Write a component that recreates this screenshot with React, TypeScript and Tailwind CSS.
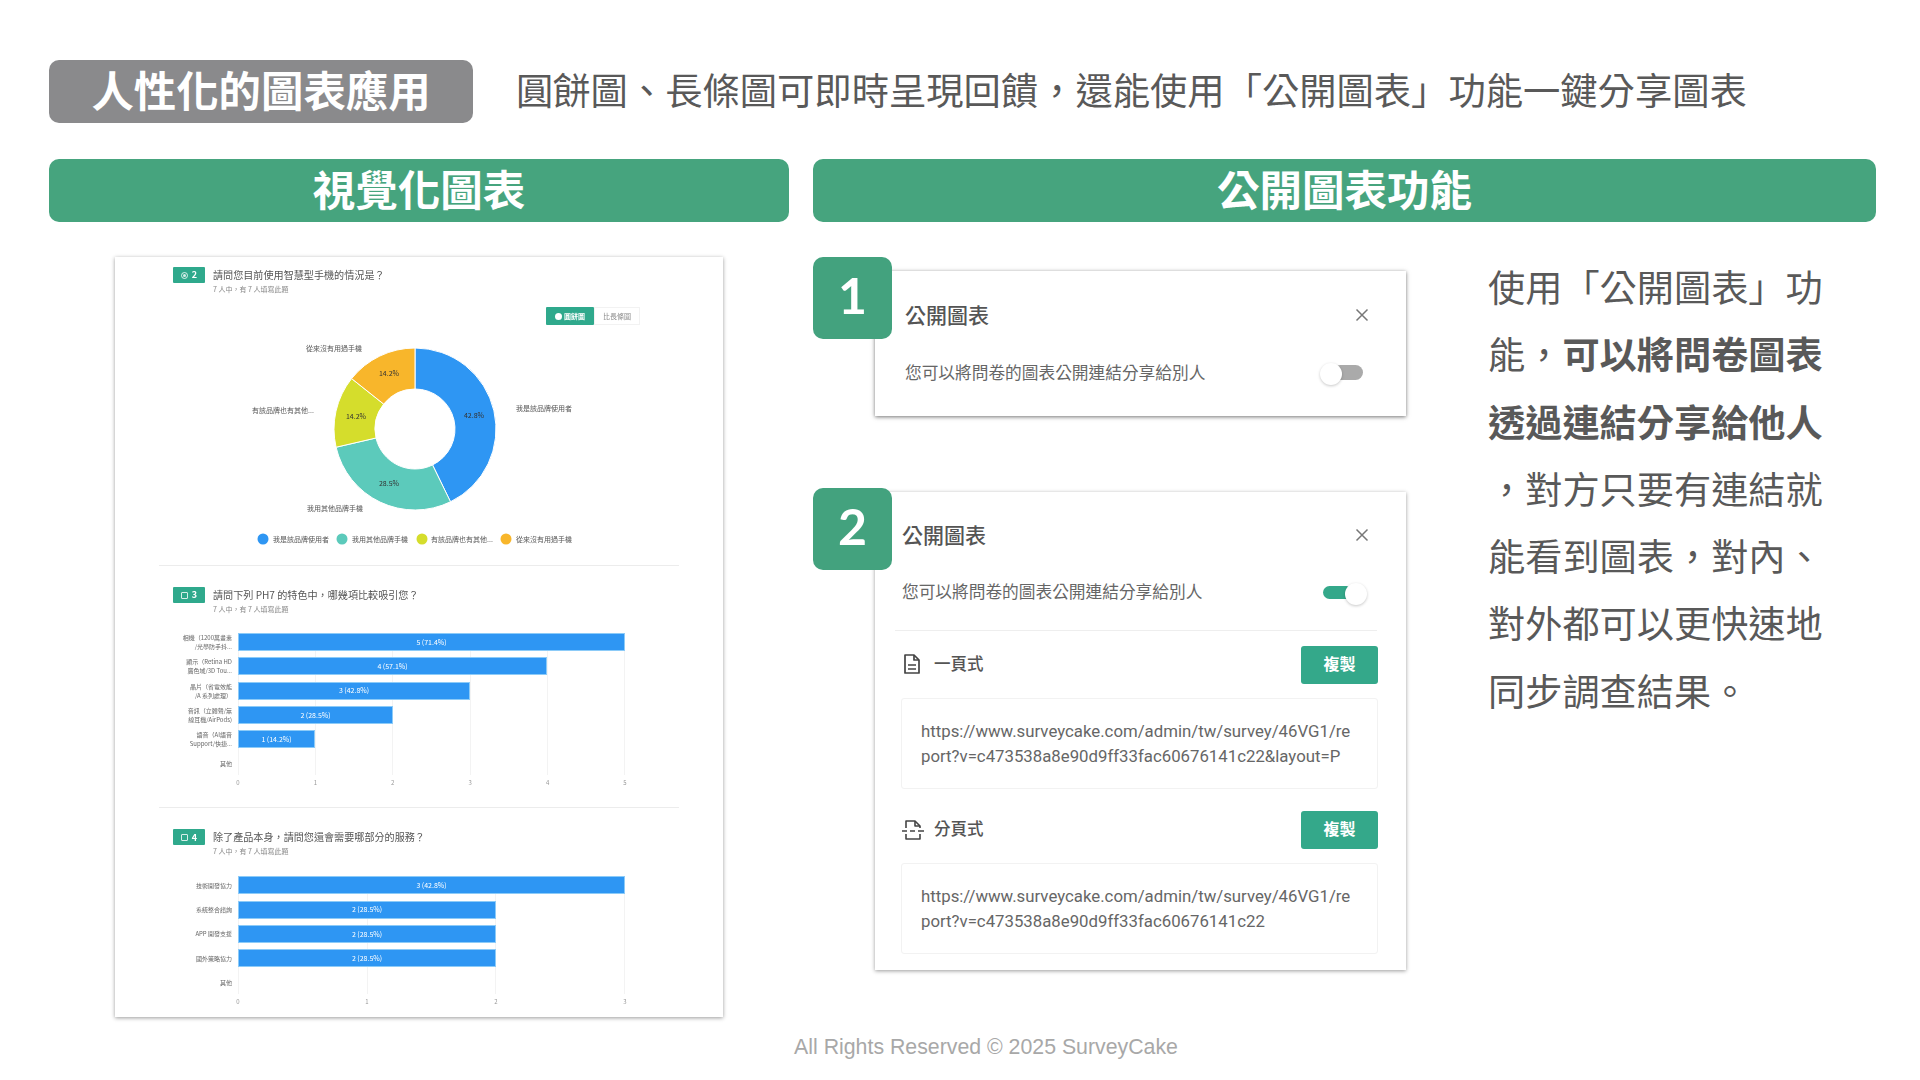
import React from 'react'

const cjk = "font-['Noto_Sans_CJK_TC','Liberation_Sans',sans-serif]"

function polar(cx: number, cy: number, r: number, deg: number) {
    const a = ((deg - 90) * Math.PI) / 180
    return [cx + r * Math.cos(a), cy + r * Math.sin(a)]
}

function slice(from: number, to: number) {
    const cx = 300
    const cy = 104
    const [x1, y1] = polar(cx, cy, 81, from)
    const [x2, y2] = polar(cx, cy, 81, to)
    const [x3, y3] = polar(cx, cy, 40, to)
    const [x4, y4] = polar(cx, cy, 40, from)
    const big = to - from > 180 ? 1 : 0
    return `M${x1} ${y1}A81 81 0 ${big} 1 ${x2} ${y2}L${x3} ${y3}A40 40 0 ${big} 0 ${x4} ${y4}Z`
}

function Donut() {
    const label = 'fill-[#555] text-[7px]'
    return (
        <svg width="608" height="240" className="block">
            <path d={slice(0, 154)} fill="#2e96f3" stroke="#fff" strokeWidth="1" />
            <path d={slice(154, 257)} fill="#5ccabb" stroke="#fff" strokeWidth="1" />
            <path d={slice(257, 308.5)} fill="#d5dd2c" stroke="#fff" strokeWidth="1" />
            <path d={slice(308.5, 360)} fill="#f8b62b" stroke="#fff" strokeWidth="1" />
            <text x="359" y="93" textAnchor="middle" className="fill-[#333] text-[7px]">42.8%</text>
            <text x="274" y="161" textAnchor="middle" className="fill-[#333] text-[7px]">28.5%</text>
            <text x="241" y="94" textAnchor="middle" className="fill-[#333] text-[7px]">14.2%</text>
            <text x="274" y="51" textAnchor="middle" className="fill-[#333] text-[7px]">14.2%</text>
            <text x="219" y="26" textAnchor="middle" className={label}>從來沒有用過手機</text>
            <text x="401" y="86" className={label}>我是該品牌使用者</text>
            <text x="137" y="88" className={label}>有該品牌也有其他...</text>
            <text x="220" y="186" textAnchor="middle" className={label}>我用其他品牌手機</text>
            <circle cx="148" cy="214" r="5.5" fill="#2e96f3" />
            <text x="158" y="216.5" className={label}>我是該品牌使用者</text>
            <circle cx="227" cy="214" r="5.5" fill="#5ccabb" />
            <text x="237" y="216.5" className={label}>我用其他品牌手機</text>
            <circle cx="307" cy="214" r="5.5" fill="#d5dd2c" />
            <text x="316" y="216.5" className={label}>有該品牌也有其他...</text>
            <circle cx="391" cy="214" r="5.5" fill="#f8b62b" />
            <text x="401" y="216.5" className={label}>從來沒有用過手機</text>
        </svg>
    )
}

function QuestionHead({ no, title, icon }: { no: number; title: string; icon: 'radio' | 'check' }) {
    return (
        <div className="flex ml-[58px] h-[28px]">
            <div className="w-[32px] h-[16px] rounded-[1px] bg-[#2fa98c] flex items-center justify-center gap-[4px] text-white text-[9px] font-bold">
                {icon === 'radio' ? (
                    <span className="w-[7px] h-[7px] rounded-full border border-white/80 flex items-center justify-center">
                        <span className="w-[3px] h-[3px] rounded-full bg-white/80"></span>
                    </span>
                ) : (
                    <span className="w-[7px] h-[7px] rounded-[1px] border border-white/80"></span>
                )}
                {no}
            </div>
            <div className="ml-[8px]">
                <div className="text-[10.1px] leading-[16px] text-[#555]">{title}</div>
                <div className="text-[7px] leading-[12px] text-[#888]">7 人中，有 7 人填寫此題</div>
            </div>
        </div>
    )
}

type Row = { label: string[]; width?: number; value?: string }

function BarChart({ rows, ticks }: { rows: Row[]; ticks: number }) {
    return (
        <div>
            <div className="flex">
                <div className="w-[117px] flex flex-col gap-[6.25px] shrink-0">
                    {rows.map((row, i) => (
                        <div key={i} className="h-[18px] flex flex-col items-end justify-center text-[6px] leading-[9px] text-[#666] whitespace-nowrap">
                            {row.label.map((line) => (
                                <span key={line}>{line}</span>
                            ))}
                        </div>
                    ))}
                </div>
                <div className="relative ml-[6px] w-[387px] pb-[3px] flex flex-col gap-[6.25px]">
                    <div className="absolute inset-0 flex justify-between">
                        {[...Array(ticks + 1)].map((_, i) => (
                            <span key={i} className="w-px h-full bg-[#f3f3f3]"></span>
                        ))}
                    </div>
                    {rows.map((row, i) => (
                        <div key={i} className="relative h-[18px]">
                            {row.width && (
                                <div
                                    className="h-full bg-[#2e96f3] border border-[#8ccbf8] flex items-center justify-center text-white text-[7px]"
                                    style={{ width: row.width }}
                                >
                                    {row.value}
                                </div>
                            )}
                        </div>
                    ))}
                </div>
            </div>
            <div className="ml-[123px] w-[387px] flex justify-between mt-[3px] h-[10px] text-[6px] leading-[10px] text-[#999]">
                {[...Array(ticks + 1)].map((_, i) => (
                    <span key={i} className="w-0 flex justify-center">{i}</span>
                ))}
            </div>
        </div>
    )
}

function Knob({ className }: { className: string }) {
    return <span className={`absolute w-[22px] h-[22px] rounded-full bg-white shadow-[0_1px_3px_rgba(0,0,0,0.22)] ${className}`}></span>
}

function CloseIcon() {
    return (
        <svg width="16" height="16" viewBox="0 0 16 16" fill="none" stroke="#777" strokeWidth="1.5">
            <path d="M2.5 2.5l11 11M13.5 2.5l-11 11" />
        </svg>
    )
}

function DocIcon() {
    return (
        <svg width="20" height="20" viewBox="0 0 20 20" fill="none" stroke="#444" strokeWidth="1.7" className="-mt-[2px]">
            <path d="M3 1h9l5 5v13H3z" strokeLinejoin="round" />
            <path d="M12 1v5h5" strokeLinejoin="round" />
            <path d="M6 11h8M6 15h8" />
        </svg>
    )
}

function SplitDocIcon() {
    return (
        <svg width="22" height="20" viewBox="0 0 22 20" fill="none" stroke="#444" strokeWidth="1.6" className="-mt-[1px]">
            <path d="M4 8V1h9l5 5v2" strokeLinejoin="round" />
            <path d="M13 1v5h5" strokeLinejoin="round" />
            <path d="M0 11h5M8 11h5M16 11h6" />
            <path d="M4 14v5h14v-5" strokeLinejoin="round" />
        </svg>
    )
}

function CopyRow({ icon, name, lines }: { icon: React.ReactNode; name: string; lines: string[] }) {
    return (
        <div>
            <div className="flex items-center h-[38px]">
                <div className="w-[32px] flex items-center">{icon}</div>
                <span className="text-[16.5px] font-medium text-[#555] -mt-[3px]">{name}</span>
                <button className="ml-auto w-[77px] h-[38px] pb-[4px] rounded-[3px] bg-[#34a88a] text-white text-[16px] font-bold">複製</button>
            </div>
            <div className="mt-[14px] -ml-px h-[91px] rounded-[3px] border border-[#f2f2f2] pl-[19px] pt-[19.5px] font-['Roboto',sans-serif] text-[16.8px] leading-[25px] text-[#666] whitespace-nowrap">
                {lines.map((line) => (
                    <div key={line}>{line}</div>
                ))}
            </div>
        </div>
    )
}

function StepBadge({ no }: { no: number }) {
    return (
        <div className="absolute -left-[62px] w-[79px] h-[82px] pb-[5px] rounded-[10px] bg-[#43a27e] flex items-center justify-center text-white text-[50px] font-bold font-['Lato',sans-serif]">
            {no}
        </div>
    )
}

const shareText = '您可以將問卷的圖表公開連結分享給別人'

function App() {
    return (
        <div className={`w-[1920px] h-[1080px] bg-white overflow-hidden text-[#595959] pt-[60px] pl-[49px] ${cjk}`}>
            <div className="flex items-center">
                <div className="w-[424px] h-[63px] pb-[5px] rounded-[10px] bg-[#8a8a8c] flex items-center justify-center text-white text-[42.4px] font-bold">人性化的圖表應用</div>
                <div className="ml-[43px] pb-[5px] text-[37.3px] leading-[50px] whitespace-nowrap">圓餅圖、長條圖可即時呈現回饋，還能使用「公開圖表」功能一鍵分享圖表</div>
            </div>

            <div className="flex gap-[24px] mt-[36px]">
                <div className="w-[740px] h-[63px] pb-[5px] rounded-[10px] bg-[#46a47e] flex items-center justify-center text-white text-[42.5px] font-bold">視覺化圖表</div>
                <div className="w-[1063px] h-[63px] pb-[5px] rounded-[10px] bg-[#46a47e] flex items-center justify-center text-white text-[42.5px] font-bold">公開圖表功能</div>
            </div>

            <div className="flex gap-[24px] mt-[35px]">
                <div className="w-[740px]">
                    <div className="ml-[66px] w-[608px] h-[760px] pt-[10px] bg-white shadow-[0_1px_4px_rgba(0,0,0,0.4)] blur-[0.6px]">
                        <QuestionHead no={2} icon="radio" title="請問您目前使用智慧型手機的情況是？" />
                        <div className="flex justify-end mt-[12px] mr-[83px] h-[18px]">
                            <div className="w-[48px] rounded-[1px] bg-[#2fa98c] flex items-center justify-center gap-[2px] text-white text-[7px] font-bold">
                                <span className="w-[7px] h-[7px] rounded-full bg-white"></span>
                                圓餅圖
                            </div>
                            <div className="w-[46px] border border-[#f2f2f2] flex items-center justify-center text-[#888] text-[7px]">比長條圖</div>
                        </div>
                        <Donut />
                        <div className="mx-[44px] border-t border-[#ececec]"></div>

                        <div className="mt-[21px]">
                            <QuestionHead no={3} icon="check" title="請問下列 PH7 的特色中，哪幾項比較吸引您？" />
                        </div>
                        <div className="mt-[18px]">
                            <BarChart
                                ticks={5}
                                rows={[
                                    { label: ['相機（1200萬畫素', '/光學防手抖...'], width: 387, value: '5 (71.4%)' },
                                    { label: ['顯示（Retina HD', '廣色域/3D Tou...'], width: 309, value: '4 (57.1%)' },
                                    { label: ['晶片（省電效能', '/A 系列處理）'], width: 232, value: '3 (42.8%)' },
                                    { label: ['音訊（立體聲/無', '線耳機/AirPods)'], width: 155, value: '2 (28.5%)' },
                                    { label: ['語音（AI語音', 'Support/快捷...'], width: 77, value: '1 (14.2%)' },
                                    { label: ['其他'] },
                                ]}
                            />
                        </div>
                        <div className="mx-[44px] mt-[19px] border-t border-[#ececec]"></div>

                        <div className="mt-[21px]">
                            <QuestionHead no={4} icon="check" title="除了產品本身，請問您還會需要哪部分的服務？" />
                        </div>
                        <div className="mt-[19px]">
                            <BarChart
                                ticks={3}
                                rows={[
                                    { label: ['技術開發協力'], width: 387, value: '3 (42.8%)' },
                                    { label: ['系統整合諮詢'], width: 258, value: '2 (28.5%)' },
                                    { label: ['APP 開發支援'], width: 258, value: '2 (28.5%)' },
                                    { label: ['國外策略協力'], width: 258, value: '2 (28.5%)' },
                                    { label: ['其他'] },
                                ]}
                            />
                        </div>
                    </div>
                </div>

                <div className="flex w-[1063px]">
                    <div className="w-[593px] pl-[62px] pt-[14px] shrink-0">
                        <div className="relative w-[531px] h-[145px] bg-white shadow-[0_1px_4px_rgba(0,0,0,0.55)]">
                            <div className="-top-[14px] absolute left-0"><StepBadge no={1} /></div>
                            <div className="flex items-center justify-between pl-[30px] pr-[36px] pt-[29px] h-[59px]">
                                <span className="text-[21px] leading-[30px] font-medium text-[#555] -mt-[3px]">公開圖表</span>
                                <CloseIcon />
                            </div>
                            <div className="flex items-center justify-between pl-[30px] pr-[43px] mt-[31px] h-[24px]">
                                <span className="text-[16.7px] text-[#666]">{shareText}</span>
                                <span className="relative w-[30px] h-[15px] -mt-[2px] rounded-full bg-[#aaa]">
                                    <Knob className="-left-[13px] -top-[2px]" />
                                </span>
                            </div>
                        </div>

                        <div className="relative w-[531px] h-[478px] mt-[76px] bg-white shadow-[0_1px_4px_rgba(0,0,0,0.4)]">
                            <div className="-top-[4px] absolute left-0"><StepBadge no={2} /></div>
                            <div className="flex items-center justify-between pl-[27px] pr-[36px] pt-[28px] h-[58px]">
                                <span className="text-[21px] leading-[30px] font-medium text-[#555] -mt-[3px]">公開圖表</span>
                                <CloseIcon />
                            </div>
                            <div className="flex items-center justify-between pl-[27px] pr-[53px] mt-[30px] h-[24px]">
                                <span className="text-[16.7px] text-[#666]">{shareText}</span>
                                <span className="relative w-[30px] h-[13px] rounded-full bg-[#34a88a]">
                                    <Knob className="left-[22px] -top-[3px]" />
                                </span>
                            </div>
                            <div className="ml-[20px] mr-[29px] mt-[26px] border-t border-[#eeeeee]"></div>
                            <div className="pl-[27px] pr-[28px] mt-[15px]">
                                <CopyRow
                                    icon={<DocIcon />}
                                    name="一頁式"
                                    lines={['https://www.surveycake.com/admin/tw/survey/46VG1/re', 'port?v=c473538a8e90d9ff33fac60676141c22&layout=P']}
                                />
                                <div className="mt-[22px]">
                                    <CopyRow
                                        icon={<SplitDocIcon />}
                                        name="分頁式"
                                        lines={['https://www.surveycake.com/admin/tw/survey/46VG1/re', 'port?v=c473538a8e90d9ff33fac60676141c22']}
                                    />
                                </div>
                            </div>
                        </div>
                    </div>

                    <div className="ml-[82px] -mt-[4px] text-[37.2px] leading-[67.3px] whitespace-nowrap">
                        <div>使用「公開圖表」功</div>
                        <div>能，<b>可以將問卷圖表</b></div>
                        <div><b>透過連結分享給他人</b></div>
                        <div>，對方只要有連結就</div>
                        <div>能看到圖表，對內、</div>
                        <div>對外都可以更快速地</div>
                        <div>同步調查結果。</div>
                    </div>
                </div>
            </div>

            <div className="mt-[17px] pl-[3px] flex justify-center w-[1871px] font-['Liberation_Sans',sans-serif] text-[21.3px] leading-[26px] text-[#a8a8a8]">
                All Rights Reserved © 2025 SurveyCake
            </div>
        </div>
    )
}

export default App
